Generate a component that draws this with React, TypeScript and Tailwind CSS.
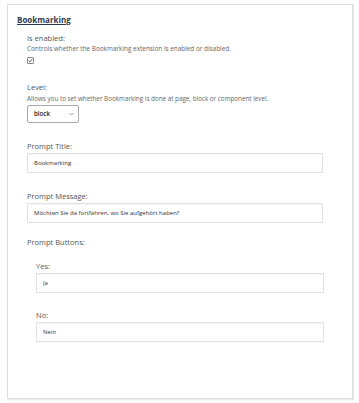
import React from "react";

type FieldProps = {
  label: string;
  value: string;
  className?: string;
};

const TextField: React.FC<FieldProps> = ({ label, value, className }) => {
  return (
    <div className={className}>
      <label className="block text-[7.5px] leading-[11px] text-[#555]">{label}</label>
      <input
        type="text"
        readOnly
        value={value}
        className="mt-[1px] block h-[20px] w-full border border-[#e2e2e2] bg-white px-[6px] text-[6px] text-[#333] shadow-[inset_0_1px_1px_rgba(0,0,0,0.04)] outline-none"
      />
    </div>
  );
};

const CheckedBox = () => (
  <svg width="7" height="7" viewBox="0 0 7 7" aria-hidden="true">
    <rect x="0.5" y="0.5" width="6" height="6" rx="0.6" fill="#fff" stroke="#666" strokeWidth="0.8" />
    <path d="M1.6 3.6 L2.9 4.9 L5.4 1.9" fill="none" stroke="#444" strokeWidth="0.9" />
  </svg>
);

const App: React.FC = () => {
  return (
    <div className="min-h-[403px] w-[359px] bg-white font-['Open_Sans','Noto_Sans',sans-serif]">
      <div className="ml-[7px] mt-[4px] h-[395px] w-[346px] border border-[#dcdcdc] bg-white px-[9px] pt-[9px] shadow-[1px_1px_1px_rgba(0,0,0,0.08)]">
        <h2 className="text-[8px] font-bold leading-[11px] text-[#2b3a4d] underline underline-offset-[1px]">
          Bookmarking
        </h2>

        <div className="mr-[20px] pl-[10px]">
          <div className="mt-[8px]">
            <div className="text-[7.5px] leading-[11px] text-[#555]">Is enabled:</div>
            <p className="text-[6.4px] leading-[9px] text-[#666]">
              Controls whether the Bookmarking extension is enabled or disabled.
            </p>
            <div className="mt-[4px] h-[7px]">
              <CheckedBox />
            </div>
          </div>

          <div className="mt-[18px]">
            <div className="text-[7.5px] leading-[11px] text-[#555]">Level:</div>
            <p className="mt-[1px] text-[6.3px] leading-[9px] text-[#666]">
              Allows you to set whether Bookmarking is done at page, block or component level.
            </p>
            <div className="mt-[2px] flex h-[18px] w-[52px] items-center justify-between rounded-[2px] border border-[#a9a9a9] bg-white pl-[6px] pr-[4px]">
              <span className="text-[6.2px] font-semibold text-[#222]">block</span>
              <svg width="5" height="4" viewBox="0 0 5 4" aria-hidden="true">
                <path d="M0.5 1 L2.5 3 L4.5 1" fill="none" stroke="#777" strokeWidth="0.7" />
              </svg>
            </div>
          </div>

          <TextField className="mt-[18px]" label="Prompt Title:" value="Bookmarking" />
          <TextField className="mt-[18px]" label="Prompt Message:" value="Möchten Sie da fortfahren, wo Sie aufgehört haben?" />

          <div className="mt-[14px]">
            <div className="text-[7.5px] leading-[11px] text-[#555]">Prompt Buttons:</div>
            <div className="mr-[-1px] pl-[9px]">
              <TextField className="mt-[13px]" label="Yes:" value="Ja" />
              <TextField className="mt-[17px]" label="No:" value="Nein" />
            </div>
          </div>
        </div>
      </div>
    </div>
  );
};

export default App;
